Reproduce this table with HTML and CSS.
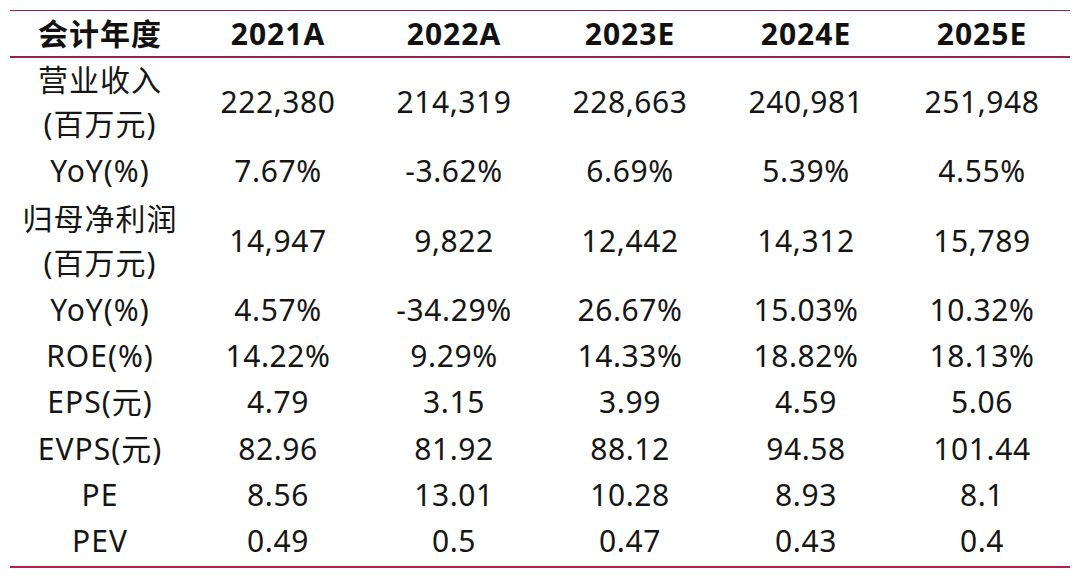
FILE: index.html
```html
<!DOCTYPE html>
<html lang="zh-CN">
<head>
<meta charset="utf-8">
<link rel="stylesheet" href="styles.css">
</head>
<body>
<table class="fin">
  <thead>
    <tr><th class="label">会计年度</th><th>2021A</th><th>2022A</th><th>2023E</th><th>2024E</th><th>2025E</th></tr>
  </thead>
  <tbody>
    <tr class="tall"><td class="label">营业收入<br>(百万元)</td><td>222,380</td><td>214,319</td><td>228,663</td><td>240,981</td><td>251,948</td></tr>
    <tr><td class="label">YoY(%)</td><td>7.67%</td><td>-3.62%</td><td>6.69%</td><td>5.39%</td><td>4.55%</td></tr>
    <tr class="tall"><td class="label">归母净利润<br>(百万元)</td><td>14,947</td><td>9,822</td><td>12,442</td><td>14,312</td><td>15,789</td></tr>
    <tr><td class="label">YoY(%)</td><td>4.57%</td><td>-34.29%</td><td>26.67%</td><td>15.03%</td><td>10.32%</td></tr>
    <tr><td class="label">ROE(%)</td><td>14.22%</td><td>9.29%</td><td>14.33%</td><td>18.82%</td><td>18.13%</td></tr>
    <tr><td class="label">EPS(元)</td><td>4.79</td><td>3.15</td><td>3.99</td><td>4.59</td><td>5.06</td></tr>
    <tr><td class="label">EVPS(元)</td><td>82.96</td><td>81.92</td><td>88.12</td><td>94.58</td><td>101.44</td></tr>
    <tr><td class="label">PE</td><td>8.56</td><td>13.01</td><td>10.28</td><td>8.93</td><td>8.1</td></tr>
    <tr><td class="label">PEV</td><td>0.49</td><td>0.5</td><td>0.47</td><td>0.43</td><td>0.4</td></tr>
  </tbody>
</table>
</body>
</html>
```
FILE: styles.css
```css
html, body {
  margin: 0;
  padding: 0;
  background: #ffffff;
}
body {
  padding: 10px 10px 0 10px;
  font-family: "Noto Sans", "Noto Sans CJK SC", sans-serif;
  color: #151515;
}
.fin {
  width: 1060px;
  border-collapse: collapse;
  table-layout: fixed;
  font-size: 30px;
  letter-spacing: 0.6px;
}
.fin th, .fin td {
  padding: 0;
  text-align: center;
  vertical-align: middle;
  white-space: nowrap;
}
.fin td {
  line-height: 42.2px;
  padding-bottom: 4px;
}
.fin tr.tall td.label {
  line-height: 44.2px;
}
.fin th.label, .fin td.label {
  width: 180px;
  letter-spacing: 1px;
}
.fin thead tr {
  border-top: 1px solid #942447;
  border-bottom: 2px solid #942447;
}
.fin th {
  height: 45px;
  line-height: 45px;
  font-weight: 700;
  letter-spacing: 1px;
  color: #111111;
}
.fin tbody tr:last-child {
  border-bottom: 2px solid #b81f4d;
}
```
